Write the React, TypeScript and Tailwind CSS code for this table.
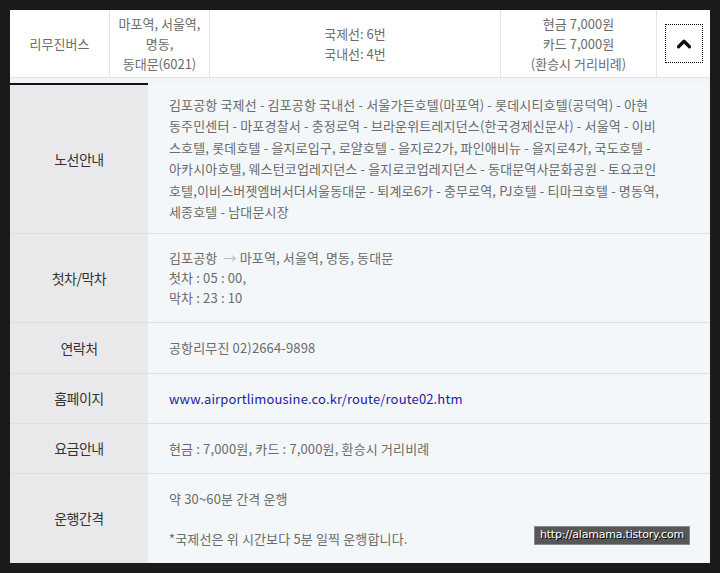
import { ChevronUp } from "lucide-react";

const font = { fontFamily: '"Noto Sans CJK KR", "Noto Sans", sans-serif' };

const routeLines = [
  "김포공항 국제선 - 김포공항 국내선 - 서울가든호텔(마포역) - 롯데시티호텔(공덕역) - 아현",
  "동주민센터 - 마포경찰서 - 충정로역 - 브라운위트레지던스(한국경제신문사) - 서울역 - 이비",
  "스호텔, 롯데호텔 - 을지로입구, 로얄호텔 - 을지로2가, 파인애비뉴 - 을지로4가, 국도호텔 -",
  "아카시아호텔, 웨스턴코업레지던스 - 을지로코업레지던스 - 동대문역사문화공원 - 토요코인",
  "호텔,이비스버젯엠버서더서울동대문 - 퇴계로6가 - 충무로역, PJ호텔 - 티마크호텔 - 명동역,",
  "세종호텔 - 남대문시장",
];

function Row({ label, height, first, children }: { label: string; height: string; first?: boolean; children: React.ReactNode }) {
  return (
    <div className={`grid grid-cols-[138px_1fr] ${height} ${first ? "" : "border-t border-[#dcdfe2]"}`}>
      <div className={`flex items-center justify-center bg-[#e9e9eb] text-[14px] text-[#333] tracking-[-0.5px] ${first ? "border-t-2 border-[#111]" : ""}`}>
        {label}
      </div>
      <div className="flex flex-col justify-center bg-[#f3f7fa] pl-[21px] text-[13px] text-[#6b6b6b] tracking-[0.15px]">
        {children}
      </div>
    </div>
  );
}

export default function App() {
  return (
    <div className="w-[720px] h-[573px] bg-[#1b1b1b] p-[10px] overflow-hidden" style={font}>
      <div className="w-[700px] h-[553px] bg-[#f3f7fa] flex flex-col relative">
        {/* 상단 요약 행 */}
        <div className="flex h-[67px] bg-white text-[13px] text-[#6b6b6b] tracking-[0px] leading-[20px]">
          <div className="w-[100px] flex items-center justify-center border-r border-[#e2e5e8]">리무진버스</div>
          <div className="w-[100px] flex items-center justify-center text-center border-r border-[#e2e5e8]">
            마포역, 서울역,<br />명동,<br />동대문(6021)
          </div>
          <div className="w-[291px] flex items-center justify-center text-center border-r border-[#e2e5e8]">
            국제선: 6번<br />국내선: 4번
          </div>
          <div className="w-[156px] flex items-center justify-center text-center border-r border-[#e2e5e8]">
            현금 7,000원<br />카드 7,000원<br />(환승시 거리비례)
          </div>
          <div className="flex-1 flex items-center justify-center">
            <button className="w-[38px] h-[39px] border border-dotted border-black flex items-center justify-center">
              <ChevronUp size={22} strokeWidth={3.5} color="#111" />
            </button>
          </div>
        </div>
        <div className="h-[6px] border-t border-[#dfe4e8] bg-[#f1f5f8]" />

        <Row label="노선안내" height="h-[150px]" first>
          <div className="leading-[21.5px]">
            {routeLines.map((l, i) => (
              <div key={i}>{l}</div>
            ))}
          </div>
        </Row>
        <Row label="첫차/막차" height="h-[89px]">
          <div className="leading-[20px]">
            <div>
              김포공항 <span className="text-[#bbb] mx-[3px]">→</span>마포역, 서울역, 명동, 동대문
            </div>
            <div>첫차 : 05 : 00,</div>
            <div>막차 : 23 : 10</div>
          </div>
        </Row>
        <Row label="연락처" height="h-[51px]">
          <div>공항리무진 02)2664-9898</div>
        </Row>
        <Row label="홈페이지" height="h-[50px]">
          <a className="text-[#1b1ba8]">www.airportlimousine.co.kr/route/route02.htm</a>
        </Row>
        <Row label="요금안내" height="h-[50px]">
          <div>현금 : 7,000원, 카드 : 7,000원, 환승시 거리비례</div>
        </Row>
        <Row label="운행간격" height="h-[90px]">
          <div className="leading-[20px]">
            <div>약 30~60분 간격 운행</div>
            <div className="mt-[20px]">*국제선은 위 시간보다 5분 일찍 운행합니다.</div>
          </div>
        </Row>

        {/* 워터마크 */}
        <div
          className="absolute left-[524px] top-[516px] w-[156px] h-[19px] bg-[#575757] border border-[#8a8a8a] flex items-center justify-center text-[11px] text-white tracking-[-0.2px]"
          style={{ fontFamily: '"DejaVu Sans", sans-serif', textShadow: "1px 1px 0 #000" }}
        >
          http://alamama.tistory.com
        </div>
      </div>
    </div>
  );
}
